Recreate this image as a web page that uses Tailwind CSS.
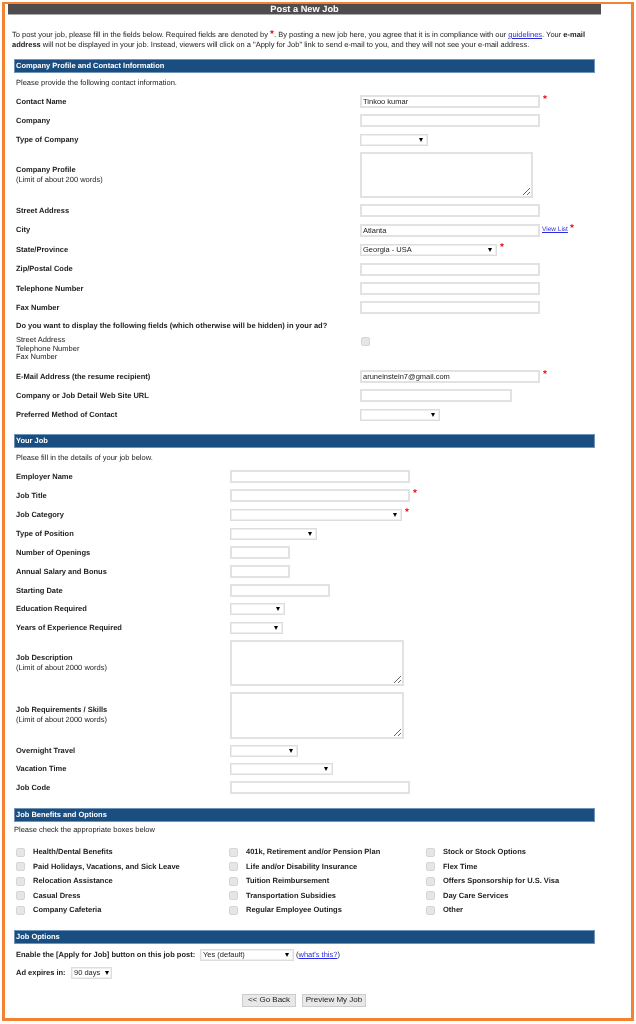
<!DOCTYPE html>
<html lang="en">
<head>
    <meta charset="UTF-8">
    <meta name="viewport" content="width=device-width, initial-scale=1.0">
    <title>Post a New Job</title>
    <script src="https://cdn.jsdelivr.net/npm/@tailwindcss/browser@4"></script>
</head>
<body class="bg-white">
<div class="ml-[2px] mt-[2px] w-[632px] h-[1019px] border-[3px] border-t-2 border-[#f58233] overflow-hidden font-['Liberation_Sans',Arial,sans-serif] text-[7.5px] leading-[10px] text-[#222] [text-rendering:geometricPrecision] blur-[0.35px]">

    <h1 class="ml-[3px] w-[593px] h-[11px] bg-[#4d4d4d] border-b border-[#aaa] text-white font-bold text-[9.25px] leading-[10px] text-center">Post a New Job</h1>

    <p class="ml-[7px] mt-[15px] w-[590px] h-[29px]">To post your job, please fill in the fields below. Required fields are denoted by <span class="text-red-600 font-bold text-[10px] leading-[8px]">*</span>. By posting a new job here, you agree that it is in compliance with our <a href="#" class="text-[#2a2ae0] underline">guidelines</a>. Your <b>e-mail</b><br><b>address</b> will not be displayed in your job. Instead, viewers will click on a "Apply for Job" link to send e-mail to you, and they will not see your e-mail address.</p>

    <!-- Company Profile -->
    <section class="ml-[9px] w-[581px]">
        <h2 class="h-[14px] bg-[#1a4d80] border border-[#6f94b8] pl-[1px] text-white font-bold leading-[12px]">Company Profile and Contact Information</h2>
        <p class="h-[19px] pl-[2px] flex items-center">Please provide the following contact information.</p>

        <div class="h-[19px] pl-[2px] flex items-center"><label class="w-[344px] font-bold">Contact Name</label><input value="Tinkoo kumar" class="w-[180px] h-[13px] border-2 border-[#e2e2e2] pl-[1px] text-[7.5px]"><span class="ml-[3px] -mt-[3px] text-red-600 font-bold text-[10px]">*</span></div>
        <div class="h-[19px] pl-[2px] flex items-center"><label class="w-[344px] font-bold">Company</label><input class="w-[180px] h-[13px] border-2 border-[#e2e2e2]"></div>
        <div class="h-[19px] pl-[2px] flex items-center"><label class="w-[344px] font-bold">Type of Company</label><div class="relative w-[68px] h-[12px] border border-[#ddd] ring-1 ring-inset ring-[#eee]"><select class="appearance-none w-full h-full"></select><span class="absolute right-[4px] top-[3px] w-0 h-0 border-x-[2.5px] border-x-transparent border-t-[4px] border-t-black"></span></div></div>
        <div class="h-[52px] pl-[2px] flex items-center"><label class="w-[344px]"><b>Company Profile</b><br>(Limit of about 200 words)</label><textarea class="w-[173px] h-[46px] border-2 border-[#e2e2e2]"></textarea></div>
        <div class="h-[19px] pl-[2px] flex items-center"><label class="w-[344px] font-bold">Street Address</label><input class="w-[180px] h-[13px] border-2 border-[#e2e2e2]"></div>
        <div class="h-[20px] pl-[2px] flex items-center"><label class="w-[344px] font-bold">City</label><input value="Atlanta" class="w-[180px] h-[13px] border-2 border-[#e2e2e2] pl-[1px] text-[7.5px]"><a href="#" class="ml-[2px] text-[6.5px] text-[#2a2ae0] underline">View List</a><span class="ml-[2px] -mt-[3px] text-red-600 font-bold text-[10px]">*</span></div>
        <div class="h-[19px] pl-[2px] flex items-center"><label class="w-[344px] font-bold">State/Province</label><div class="relative w-[137px] h-[12px] border border-[#ddd] ring-1 ring-inset ring-[#eee]"><select class="appearance-none w-full h-full pl-[2px] text-[7.5px]"><option>Georgia - USA</option></select><span class="absolute right-[4px] top-[3px] w-0 h-0 border-x-[2.5px] border-x-transparent border-t-[4px] border-t-black"></span></div><span class="ml-[3px] -mt-[3px] text-red-600 font-bold text-[10px]">*</span></div>
        <div class="h-[20px] pl-[2px] flex items-center"><label class="w-[344px] font-bold">Zip/Postal Code</label><input class="w-[180px] h-[13px] border-2 border-[#e2e2e2]"></div>
        <div class="h-[19px] pl-[2px] flex items-center"><label class="w-[344px] font-bold">Telephone Number</label><input class="w-[180px] h-[13px] border-2 border-[#e2e2e2]"></div>
        <div class="h-[19px] pl-[2px] flex items-center"><label class="w-[344px] font-bold">Fax Number</label><input class="w-[180px] h-[13px] border-2 border-[#e2e2e2]"></div>
        <div class="h-[17px] pl-[2px] flex items-center font-bold">Do you want to display the following fields (which otherwise will be hidden) in your ad?</div>
        <div class="h-[33px] pl-[2px] pt-[2px] flex items-start"><label class="w-[345px] leading-[8.7px]">Street Address<br>Telephone Number<br>Fax Number</label><input type="checkbox" class="appearance-none w-[9px] h-[9px] mt-[1px] rounded-[2px] border border-[#d5d5d5] bg-[#e6e6e6]"></div>
        <div class="h-[19px] pl-[2px] flex items-center"><label class="w-[344px] font-bold">E-Mail Address (the resume recipient)</label><input value="aruneinstein7@gmail.com" class="w-[180px] h-[13px] border-2 border-[#e2e2e2] pl-[1px] text-[7.5px]"><span class="ml-[3px] -mt-[3px] text-red-600 font-bold text-[10px]">*</span></div>
        <div class="h-[19px] pl-[2px] flex items-center"><label class="w-[344px] font-bold">Company or Job Detail Web Site URL</label><input class="w-[152px] h-[13px] border-2 border-[#e2e2e2]"></div>
        <div class="h-[19px] pl-[2px] flex items-center"><label class="w-[344px] font-bold">Preferred Method of Contact</label><div class="relative w-[80px] h-[12px] border border-[#ddd] ring-1 ring-inset ring-[#eee]"><select class="appearance-none w-full h-full"></select><span class="absolute right-[4px] top-[3px] w-0 h-0 border-x-[2.5px] border-x-transparent border-t-[4px] border-t-black"></span></div></div>
    </section>

    <!-- Your Job -->
    <section class="ml-[9px] mt-[10px] w-[581px]">
        <h2 class="h-[14px] bg-[#1a4d80] border border-[#6f94b8] pl-[1px] text-white font-bold leading-[12px]">Your Job</h2>
        <p class="h-[19px] pl-[2px] flex items-center">Please fill in the details of your job below.</p>

        <div class="h-[19px] pl-[2px] flex items-center"><label class="w-[214px] font-bold">Employer Name</label><input class="w-[180px] h-[13px] border-2 border-[#e2e2e2]"></div>
        <div class="h-[19px] pl-[2px] flex items-center"><label class="w-[214px] font-bold">Job Title</label><input class="w-[180px] h-[13px] border-2 border-[#e2e2e2]"><span class="ml-[3px] -mt-[3px] text-red-600 font-bold text-[10px]">*</span></div>
        <div class="h-[19px] pl-[2px] flex items-center"><label class="w-[214px] font-bold">Job Category</label><div class="relative w-[172px] h-[12px] border border-[#ddd] ring-1 ring-inset ring-[#eee]"><select class="appearance-none w-full h-full"></select><span class="absolute right-[4px] top-[3px] w-0 h-0 border-x-[2.5px] border-x-transparent border-t-[4px] border-t-black"></span></div><span class="ml-[3px] -mt-[3px] text-red-600 font-bold text-[10px]">*</span></div>
        <div class="h-[19px] pl-[2px] flex items-center"><label class="w-[214px] font-bold">Type of Position</label><div class="relative w-[87px] h-[12px] border border-[#ddd] ring-1 ring-inset ring-[#eee]"><select class="appearance-none w-full h-full"></select><span class="absolute right-[4px] top-[3px] w-0 h-0 border-x-[2.5px] border-x-transparent border-t-[4px] border-t-black"></span></div></div>
        <div class="h-[19px] pl-[2px] flex items-center"><label class="w-[214px] font-bold">Number of Openings</label><input class="w-[60px] h-[13px] border-2 border-[#e2e2e2]"></div>
        <div class="h-[19px] pl-[2px] flex items-center"><label class="w-[214px] font-bold">Annual Salary and Bonus</label><input class="w-[60px] h-[13px] border-2 border-[#e2e2e2]"></div>
        <div class="h-[19px] pl-[2px] flex items-center"><label class="w-[214px] font-bold">Starting Date</label><input class="w-[100px] h-[13px] border-2 border-[#e2e2e2]"></div>
        <div class="h-[18px] pl-[2px] flex items-center"><label class="w-[214px] font-bold">Education Required</label><div class="relative w-[55px] h-[12px] border border-[#ddd] ring-1 ring-inset ring-[#eee]"><select class="appearance-none w-full h-full"></select><span class="absolute right-[4px] top-[3px] w-0 h-0 border-x-[2.5px] border-x-transparent border-t-[4px] border-t-black"></span></div></div>
        <div class="h-[19px] pl-[2px] flex items-center"><label class="w-[214px] font-bold">Years of Experience Required</label><div class="relative w-[53px] h-[12px] border border-[#ddd] ring-1 ring-inset ring-[#eee]"><select class="appearance-none w-full h-full"></select><span class="absolute right-[4px] top-[3px] w-0 h-0 border-x-[2.5px] border-x-transparent border-t-[4px] border-t-black"></span></div></div>
        <div class="h-[52px] pl-[2px] flex items-center"><label class="w-[214px]"><b>Job Description</b><br>(Limit of about 2000 words)</label><textarea class="w-[174px] h-[46px] border-2 border-[#e2e2e2]"></textarea></div>
        <div class="h-[52px] pl-[2px] flex items-center"><label class="w-[214px]"><b>Job Requirements / Skills</b><br>(Limit of about 2000 words)</label><textarea class="w-[174px] h-[47px] border-2 border-[#e2e2e2]"></textarea></div>
        <div class="h-[19px] pl-[2px] flex items-center"><label class="w-[214px] font-bold">Overnight Travel</label><div class="relative w-[68px] h-[12px] border border-[#ddd] ring-1 ring-inset ring-[#eee]"><select class="appearance-none w-full h-full"></select><span class="absolute right-[4px] top-[3px] w-0 h-0 border-x-[2.5px] border-x-transparent border-t-[4px] border-t-black"></span></div></div>
        <div class="h-[18px] pl-[2px] flex items-center"><label class="w-[214px] font-bold">Vacation Time</label><div class="relative w-[103px] h-[12px] border border-[#ddd] ring-1 ring-inset ring-[#eee]"><select class="appearance-none w-full h-full"></select><span class="absolute right-[4px] top-[3px] w-0 h-0 border-x-[2.5px] border-x-transparent border-t-[4px] border-t-black"></span></div></div>
        <div class="h-[19px] pl-[2px] flex items-center"><label class="w-[214px] font-bold">Job Code</label><input class="w-[180px] h-[13px] border-2 border-[#e2e2e2]"></div>
    </section>

    <!-- Job Benefits and Options -->
    <section class="ml-[9px] mt-[11px] w-[581px]">
        <h2 class="h-[14px] bg-[#1a4d80] border border-[#6f94b8] pl-[1px] text-white font-bold leading-[12px]">Job Benefits and Options</h2>
        <p class="h-[18px] flex items-center -mt-[1px]">Please check the appropriate boxes below</p>
        <div class="mt-[6px] pl-[2px] grid grid-cols-[213px_197px_1fr] auto-rows-[14.5px] items-center font-bold">
            <label class="flex items-center"><input type="checkbox" class="appearance-none w-[9px] h-[9px] rounded-[2px] border border-[#d5d5d5] bg-[#e6e6e6] mr-[8px]">Health/Dental Benefits</label>
            <label class="flex items-center"><input type="checkbox" class="appearance-none w-[9px] h-[9px] rounded-[2px] border border-[#d5d5d5] bg-[#e6e6e6] mr-[8px]">401k, Retirement and/or Pension Plan</label>
            <label class="flex items-center"><input type="checkbox" class="appearance-none w-[9px] h-[9px] rounded-[2px] border border-[#d5d5d5] bg-[#e6e6e6] mr-[8px]">Stock or Stock Options</label>
            <label class="flex items-center"><input type="checkbox" class="appearance-none w-[9px] h-[9px] rounded-[2px] border border-[#d5d5d5] bg-[#e6e6e6] mr-[8px]">Paid Holidays, Vacations, and Sick Leave</label>
            <label class="flex items-center"><input type="checkbox" class="appearance-none w-[9px] h-[9px] rounded-[2px] border border-[#d5d5d5] bg-[#e6e6e6] mr-[8px]">Life and/or Disability Insurance</label>
            <label class="flex items-center"><input type="checkbox" class="appearance-none w-[9px] h-[9px] rounded-[2px] border border-[#d5d5d5] bg-[#e6e6e6] mr-[8px]">Flex Time</label>
            <label class="flex items-center"><input type="checkbox" class="appearance-none w-[9px] h-[9px] rounded-[2px] border border-[#d5d5d5] bg-[#e6e6e6] mr-[8px]">Relocation Assistance</label>
            <label class="flex items-center"><input type="checkbox" class="appearance-none w-[9px] h-[9px] rounded-[2px] border border-[#d5d5d5] bg-[#e6e6e6] mr-[8px]">Tuition Reimbursement</label>
            <label class="flex items-center"><input type="checkbox" class="appearance-none w-[9px] h-[9px] rounded-[2px] border border-[#d5d5d5] bg-[#e6e6e6] mr-[8px]">Offers Sponsorship for U.S. Visa</label>
            <label class="flex items-center"><input type="checkbox" class="appearance-none w-[9px] h-[9px] rounded-[2px] border border-[#d5d5d5] bg-[#e6e6e6] mr-[8px]">Casual Dress</label>
            <label class="flex items-center"><input type="checkbox" class="appearance-none w-[9px] h-[9px] rounded-[2px] border border-[#d5d5d5] bg-[#e6e6e6] mr-[8px]">Transportation Subsidies</label>
            <label class="flex items-center"><input type="checkbox" class="appearance-none w-[9px] h-[9px] rounded-[2px] border border-[#d5d5d5] bg-[#e6e6e6] mr-[8px]">Day Care Services</label>
            <label class="flex items-center"><input type="checkbox" class="appearance-none w-[9px] h-[9px] rounded-[2px] border border-[#d5d5d5] bg-[#e6e6e6] mr-[8px]">Company Cafeteria</label>
            <label class="flex items-center"><input type="checkbox" class="appearance-none w-[9px] h-[9px] rounded-[2px] border border-[#d5d5d5] bg-[#e6e6e6] mr-[8px]">Regular Employee Outings</label>
            <label class="flex items-center"><input type="checkbox" class="appearance-none w-[9px] h-[9px] rounded-[2px] border border-[#d5d5d5] bg-[#e6e6e6] mr-[8px]">Other</label>
        </div>
    </section>

    <!-- Job Options -->
    <section class="ml-[9px] mt-[12px] w-[581px]">
        <h2 class="h-[14px] bg-[#1a4d80] border border-[#6f94b8] pl-[1px] text-white font-bold leading-[12px]">Job Options</h2>
        <div class="mt-[2px] h-[18px] pl-[2px] flex items-center"><label class="w-[184px] font-bold">Enable the [Apply for Job] button on this job post:</label><div class="relative w-[94px] h-[12px] border border-[#ddd] ring-1 ring-inset ring-[#eee]"><select class="appearance-none w-full h-full pl-[2px] text-[7.5px]"><option>Yes (default)</option></select><span class="absolute right-[4px] top-[3px] w-0 h-0 border-x-[2.5px] border-x-transparent border-t-[4px] border-t-black"></span></div><span class="ml-[2px]">(<a href="#" class="text-[#2a2ae0] underline">what's this?</a>)</span></div>
        <div class="h-[18px] pl-[2px] flex items-center"><label class="w-[55px] font-bold">Ad expires in:</label><div class="relative w-[41px] h-[12px] border border-[#ddd] ring-1 ring-inset ring-[#eee]"><select class="appearance-none w-full h-full pl-[2px] text-[7.5px]"><option>90 days</option></select><span class="absolute right-[2px] top-[3px] w-0 h-0 border-x-[2.5px] border-x-transparent border-t-[4px] border-t-black"></span></div></div>
    </section>

    <div class="mt-[12px] ml-[237px] flex gap-[6px]">
        <button class="w-[54px] h-[13px] bg-[#e8e8e8] border border-[#ccc] text-[8px] leading-[10px]">&lt;&lt; Go Back</button>
        <button class="w-[64px] h-[13px] bg-[#e8e8e8] border border-[#ccc] text-[8px] leading-[10px]">Preview My Job</button>
    </div>
</div>
</body>
</html>
